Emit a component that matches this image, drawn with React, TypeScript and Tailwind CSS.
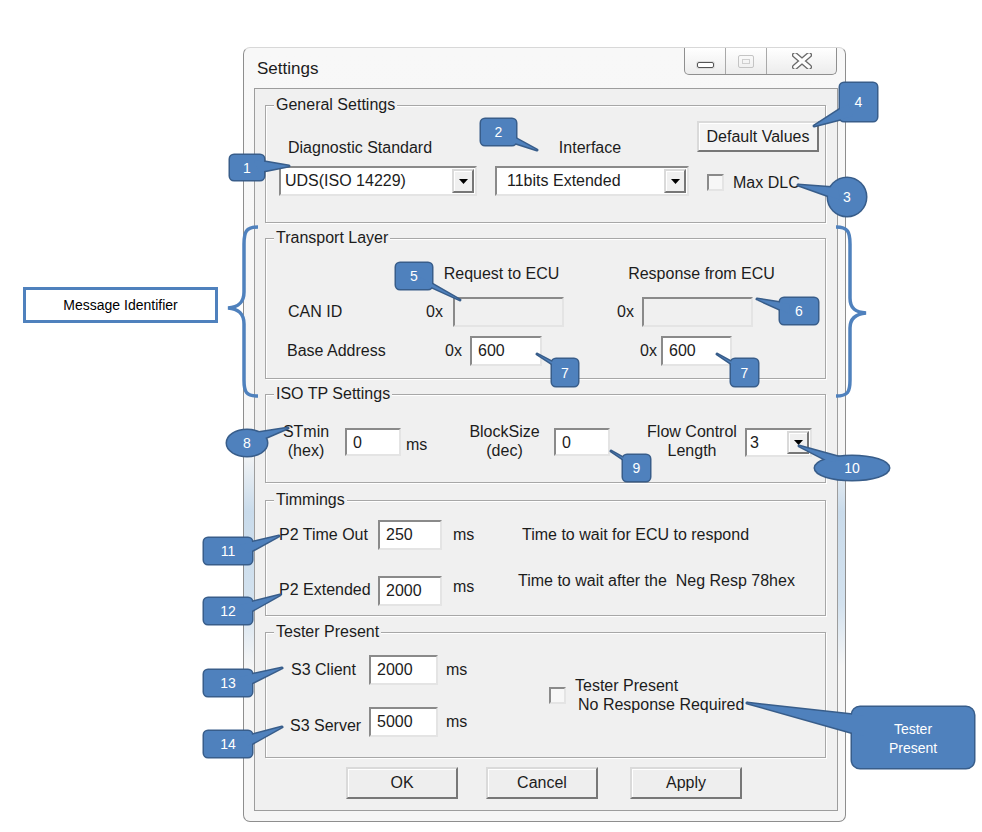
import React from "react";

const FILL = "#4f81bd";
const EDGE = "#385d8a";

const boxes = [
  { n: "1", x: 230, y: 155, w: 34, h: 25, tail: "254,160 259,172 289,166" },
  { n: "2", x: 481, y: 119, w: 35, h: 26, tail: "506,133 512,142 537,150" },
  { n: "4", x: 840, y: 83, w: 37, h: 38, tail: "848,104 853,116 814,126" },
  { n: "5", x: 396, y: 263, w: 36, h: 26, tail: "420,277 427,285 460,300" },
  { n: "6", x: 780, y: 298, w: 38, h: 26, tail: "789,304 790,314 757,299" },
  { n: "7", x: 552, y: 359, w: 26, h: 27, tail: "558,365 566,373 537,354" },
  { n: "7", x: 731, y: 359, w: 27, h: 27, tail: "737,365 745,373 717,354" },
  { n: "9", x: 623, y: 455, w: 27, h: 26, tail: "629,461 636,468 611,451" },
  { n: "11", x: 204, y: 538, w: 48, h: 26, tail: "240,545 248,553 279,536" },
  { n: "12", x: 204, y: 598, w: 48, h: 26, tail: "240,605 248,613 280,595" },
  { n: "13", x: 204, y: 670, w: 48, h: 26, tail: "240,677 248,685 282,668" },
  { n: "14", x: 204, y: 731, w: 48, h: 26, tail: "240,738 248,746 282,727" },
];

const ovals = [
  { n: "3", cx: 847, cy: 197, rx: 19, ry: 19, tail: "838,188 840,200 798,185" },
  { n: "8", cx: 247, cy: 443, rx: 20, ry: 13, tail: "249,434 258,441 288,428" },
  { n: "10", cx: 852, cy: 468, rx: 37, ry: 12, tail: "830,462 846,459 799,446" },
];

const sunken =
  "border-2 border-t-[#8a8a8a] border-l-[#8a8a8a] border-r-[#e4e4e4] border-b-[#e4e4e4]";
const raised =
  "border-2 border-t-[#dadada] border-l-[#dadada] border-r-[#777] border-b-[#777] shadow-[inset_1px_1px_0_#fff]";

function Group({ title, className, children }: { title: string; className: string; children?: React.ReactNode }) {
  return (
    <div
      className={`ml-[10px] w-[561px] shrink-0 flex flex-col border border-[#a7a7a7] shadow-[inset_1px_1px_0_#fff,1px_1px_0_#fff] ${className}`}
    >
      <span className="-mt-[10px] ml-[8px] px-[2px] self-start bg-[#f0f0f0] leading-[18px]">{title}</span>
      {children}
    </div>
  );
}

function Field({ value, className }: { value?: string; className: string }) {
  return (
    <div className={`shrink-0 flex items-center pl-[6px] ${sunken} ${className}`}>{value}</div>
  );
}

function Combo({ value, className, pad }: { value: string; className: string; pad: string }) {
  return (
    <div className={`shrink-0 flex bg-white ${sunken} ${className}`}>
      <div className={`flex-1 flex items-center ${pad}`}>{value}</div>
      <div className={`w-[22px] my-[1px] mr-[1px] flex items-center justify-center bg-[#f0f0f0] ${raised}`}>
        <svg width="9" height="5" viewBox="0 0 9 5">
          <path d="M0 0h9L4.5 5z" fill="#000" />
        </svg>
      </div>
    </div>
  );
}

function Check() {
  return <div className={`shrink-0 w-[17px] h-[17px] bg-[#f7f7f7] ${sunken}`} />;
}

function Btn({ label, className }: { label: string; className: string }) {
  return (
    <div className={`shrink-0 flex items-center justify-center bg-[#eeeeee] ${raised} ${className}`}>{label}</div>
  );
}

export default function App() {
  return (
    <div className="relative w-[982px] h-[832px] bg-white overflow-hidden font-['Liberation_Sans',Arial,sans-serif] text-[16px] leading-[18px] text-[#1c1c1c]">
      <div className="pt-[47px] pl-[243px]">
        <div className="w-[603px] h-[775px] flex flex-col rounded-[7px] border border-[#8e8e8e] border-t-[#d8d8d8] bg-[linear-gradient(180deg,#f8f8f8_0%,#f6f6f6_52%,#c9dbeb_60%,#d3e2ef_72%,#f6f6f6_80%)]">
          {/* title bar */}
          <div className="h-[40px] shrink-0 flex justify-between">
            <span className="mt-[11px] ml-[13px] text-[17px] leading-[20px]">Settings</span>
            <div className="mr-[8px] h-[27px] flex rounded-b-[5px] border border-t-0 border-[#8f8f8f] bg-[linear-gradient(180deg,#ffffff,#ececec)] overflow-hidden">
              <div className="w-[41px] flex items-end justify-center pb-[6px] border-r border-[#a9a9a9]">
                <div className="w-[17px] h-[6px] rounded-[2px] border border-[#555] bg-white shadow-[0_0_0_1px_#ddd]" />
              </div>
              <div className="w-[41px] flex items-center justify-center border-r border-[#a9a9a9]">
                <div className="w-[16px] h-[13px] rounded-[2px] border border-[#c4c4c4] flex items-center justify-center">
                  <div className="w-[8px] h-[5px] border border-[#cfcfcf]" />
                </div>
              </div>
              <div className="w-[69px] flex items-center justify-center">
                <svg width="20" height="16" viewBox="0 0 20 16">
                  <path d="M3 2L17 14M17 2L3 14" stroke="#6a6a6a" strokeWidth="6" strokeLinecap="round" />
                  <path d="M3 2L17 14M17 2L3 14" stroke="#fdfdfd" strokeWidth="3.4" strokeLinecap="round" />
                </svg>
              </div>
            </div>
          </div>

          {/* client area */}
          <div className="ml-[10px] w-[584px] h-[723px] flex flex-col border border-[#9d9d9d] bg-[#f0f0f0]">
            <Group title="General Settings" className="mt-[16px] h-[118px]">
              <div className="mt-[7px] h-[31px] flex items-start">
                <div className="w-[224px] pl-[22px] mt-[18px]">Diagnostic Standard</div>
                <div className="w-[200px] text-center mt-[18px]">Interface</div>
                <Btn label="Default Values" className="ml-[7px] w-[122px] h-[31px] bg-[#f4f4f4]" />
              </div>
              <div className="mt-[14px] h-[30px] flex items-center">
                <Combo value="UDS(ISO 14229)" pad="pl-[4px]" className="ml-[13px] w-[198px] h-[30px]" />
                <Combo value="11bits Extended" pad="pl-[10px]" className="ml-[18px] w-[194px] h-[30px]" />
                <div className="ml-[18px] mt-[2px]">
                  <Check />
                </div>
                <span className="ml-[9px] mt-[4px]">Max DLC</span>
              </div>
            </Group>

            <Group title="Transport Layer" className="mt-[15px] h-[141px]">
              <div className="mt-[18px] flex">
                <div className="ml-[170px] w-[131px] text-center">Request to ECU</div>
                <div className="ml-[55px] w-[159px] text-center">Response from ECU</div>
              </div>
              <div className="mt-[14px] h-[30px] flex items-center">
                <div className="w-[160px] pl-[22px]">CAN ID</div>
                <div className="w-[27px]">0x</div>
                <Field className="w-[111px] h-[30px] bg-[#f0f0f0]" />
                <div className="ml-[53px] w-[25px]">0x</div>
                <Field className="w-[111px] h-[30px] bg-[#f0f0f0]" />
              </div>
              <div className="mt-[9px] h-[30px] flex items-center">
                <div className="w-[179px] pl-[21px]">Base Address</div>
                <div className="w-[25px]">0x</div>
                <Field value="600" className="w-[72px] h-[30px] bg-white" />
                <div className="ml-[98px] w-[21px]">0x</div>
                <Field value="600" className="w-[71px] h-[30px] bg-white" />
              </div>
            </Group>

            <Group title="ISO TP Settings" className="mt-[15px] h-[89px]">
              <div className="mt-[19px] flex items-start leading-[19px]">
                <div className="ml-[10px] w-[60px] text-center">
                  STmin
                  <br />
                  (hex)
                </div>
                <Field value="0" className="ml-[9px] mt-[6px] w-[56px] h-[28px] bg-white" />
                <div className="ml-[5px] mt-[13px] w-[22px]">ms</div>
                <div className="ml-[36px] w-[81px] text-center">
                  BlockSize
                  <br />
                  (dec)
                </div>
                <Field value="0" className="ml-[9px] mt-[6px] w-[56px] h-[28px] bg-white" />
                <div className="ml-[32px] w-[100px] text-center">
                  Flow Control
                  <br />
                  Length
                </div>
                <Combo value="3" pad="pl-[3px]" className="ml-[3px] mt-[6px] w-[67px] h-[29px]" />
              </div>
            </Group>

            <Group title="Timmings" className="mt-[17px] h-[116px]">
              <div className="mt-[11px] h-[30px] flex items-center">
                <div className="w-[112px] pl-[13px]">P2 Time Out</div>
                <Field value="250" className="w-[64px] h-[30px] bg-white" />
                <div className="ml-[11px] w-[22px]">ms</div>
                <div className="ml-[47px]">Time to wait for ECU to respond</div>
              </div>
              <div className="mt-[22px] flex items-start">
                <div className="mt-[9px] w-[112px] pl-[13px]">P2 Extended</div>
                <Field value="2000" className="mt-[4px] w-[64px] h-[30px] bg-white" />
                <div className="mt-[6px] ml-[11px] w-[22px]">ms</div>
                <div className="ml-[43px] whitespace-pre">Time to wait after the  Neg Resp 78hex</div>
              </div>
            </Group>

            <Group title="Tester Present" className="mt-[16px] h-[126px]">
              <div className="flex items-start">
                <div className="w-[283px] flex flex-col">
                  <div className="mt-[14px] h-[30px] flex items-center">
                    <div className="w-[103px] pl-[25px]">S3 Client</div>
                    <Field value="2000" className="w-[69px] h-[30px] bg-white" />
                    <div className="ml-[8px]">ms</div>
                  </div>
                  <div className="mt-[22px] h-[30px] flex items-center">
                    <div className="w-[103px] pl-[24px] mt-[8px]">S3 Server</div>
                    <Field value="5000" className="w-[69px] h-[30px] bg-white" />
                    <div className="ml-[8px]">ms</div>
                  </div>
                </div>
                <div className="mt-[35px] flex items-center">
                  <Check />
                  <div className="ml-[9px] leading-[19px]">
                    <div>Tester Present</div>
                    <div className="pl-[3px]">No Response Required</div>
                  </div>
                </div>
              </div>
            </Group>

            <div className="mt-[9px] flex">
              <Btn label="OK" className="ml-[91px] w-[112px] h-[32px]" />
              <Btn label="Cancel" className="ml-[28px] w-[112px] h-[32px]" />
              <Btn label="Apply" className="ml-[32px] w-[112px] h-[32px]" />
            </div>
          </div>
        </div>
      </div>

      {/* annotation: message identifier label */}
      <div className="absolute left-[23px] top-[287px] w-[195px] h-[36px] flex items-center justify-center border-[3px] border-[#4f81bd] bg-white text-[14px] text-black">
        Message Identifier
      </div>

      {/* annotation layer: braces and callouts */}
      <svg className="absolute left-0 top-0 pointer-events-none" width="982" height="832" viewBox="0 0 982 832">
        <path
          d="M258 227 C246 227 244 232 244 244 L244 292 C244 303 238 307 228 308 C238 309 244 313 244 324 L244 380 C244 392 246 396 258 396"
          fill="none"
          stroke={FILL}
          strokeWidth="3.5"
        />
        <path
          d="M836 227 C848 227 850 232 850 244 L850 298 C850 309 856 312 866 313 C856 314 850 318 850 328 L850 380 C850 392 848 396 836 396"
          fill="none"
          stroke={FILL}
          strokeWidth="3.5"
        />

        {boxes.map((b, i) => (
          <g key={"b" + i}>
            <rect x={b.x} y={b.y} width={b.w} height={b.h} rx="4" fill={FILL} stroke={EDGE} strokeWidth="3" />
            <polygon points={b.tail} fill={FILL} stroke={EDGE} strokeWidth="3" strokeLinejoin="round" />
            <rect x={b.x} y={b.y} width={b.w} height={b.h} rx="4" fill={FILL} />
            <polygon points={b.tail} fill={FILL} />
            <text
              x={b.x + b.w / 2}
              y={b.y + b.h / 2 + 5}
              textAnchor="middle"
              fontSize="14"
              fontFamily="Liberation Sans, Arial, sans-serif"
              fill="#fff"
            >
              {b.n}
            </text>
          </g>
        ))}

        {ovals.map((o, i) => (
          <g key={"o" + i}>
            <ellipse cx={o.cx} cy={o.cy} rx={o.rx} ry={o.ry} fill={FILL} stroke={EDGE} strokeWidth="3" />
            <polygon points={o.tail} fill={FILL} stroke={EDGE} strokeWidth="3" strokeLinejoin="round" />
            <ellipse cx={o.cx} cy={o.cy} rx={o.rx} ry={o.ry} fill={FILL} />
            <polygon points={o.tail} fill={FILL} />
            <text
              x={o.cx}
              y={o.cy + 5}
              textAnchor="middle"
              fontSize="14"
              fontFamily="Liberation Sans, Arial, sans-serif"
              fill="#fff"
            >
              {o.n}
            </text>
          </g>
        ))}

        <g>
          <rect x="852" y="707" width="122" height="61" rx="8" fill={FILL} stroke={EDGE} strokeWidth="3" />
          <polygon points="864,716 864,736 747,703" fill={FILL} stroke={EDGE} strokeWidth="3" strokeLinejoin="round" />
          <rect x="852" y="707" width="122" height="61" rx="8" fill={FILL} />
          <polygon points="864,716 864,736 747,703" fill={FILL} />
          <text textAnchor="middle" fontSize="14" fontFamily="Liberation Sans, Arial, sans-serif" fill="#fff">
            <tspan x="913" y="734">Tester</tspan>
            <tspan x="913" y="753">Present</tspan>
          </text>
        </g>
      </svg>
    </div>
  );
}
